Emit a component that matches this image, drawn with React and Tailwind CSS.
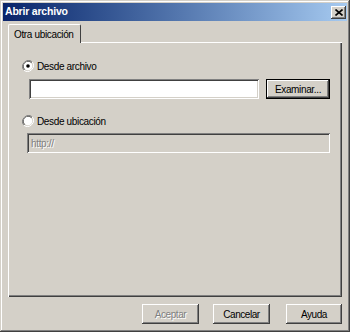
import React from "react";

const raised =
  "shadow-[inset_-1px_-1px_#404040,inset_1px_1px_#ffffff,inset_-2px_-2px_#808080,inset_2px_2px_#d4d0c8]";
const sunken =
  "shadow-[inset_1px_1px_#808080,inset_-1px_-1px_#ffffff,inset_2px_2px_#404040,inset_-2px_-2px_#d4d0c8]";

const Radio = ({ checked }) => (
  <svg width="12" height="12" viewBox="0 0 12 12" className="shrink-0">
    <path d="M10.2 1.8 A6 6 0 0 0 1.8 10.2" fill="none" stroke="#808080" strokeWidth="1" />
    <path d="M9.5 2.5 A5 5 0 0 0 2.5 9.5" fill="none" stroke="#404040" strokeWidth="1" />
    <path d="M1.8 10.2 A6 6 0 0 0 10.2 1.8" fill="none" stroke="#ffffff" strokeWidth="1" />
    <circle cx="6" cy="6" r="4.3" fill="#ffffff" />
    {checked && <circle cx="6" cy="6" r="1.8" fill="#000000" />}
  </svg>
);

const Button = ({ children, disabled, isDefault, className = "" }) => (
  <div
    className={`${className} h-[20px] flex items-center justify-center ${
      isDefault ? "border border-black" : ""
    }`}
  >
    <div className={`w-full h-full flex items-center justify-center ${raised}`}>
      <span
        className={
          disabled
            ? "text-[#808080] [text-shadow:1px_1px_0_#ffffff]"
            : "text-black"
        }
      >
        {children}
      </span>
    </div>
  </div>
);

export default function App() {
  return (
    <div
      className={`w-[350px] h-[332px] bg-[#d4d0c8] p-[3px] flex flex-col text-[10px] tracking-[-0.35px] font-['Liberation_Sans',Arial,sans-serif] shadow-[inset_-1px_-1px_#404040,inset_1px_1px_#d4d0c8,inset_-2px_-2px_#808080,inset_2px_2px_#ffffff]`}
    >
      {/* Title bar */}
      <div className="h-[18px] flex items-center justify-between pl-[2px] pr-[1px] bg-gradient-to-r from-[#0a246a] to-[#a6caf0]">
        <span className="text-white font-bold text-[10.5px] tracking-[-0.2px]">Abrir archivo</span>
        <div className={`w-[15px] h-[13px] bg-[#d4d0c8] flex items-center justify-center ${raised}`}>
          <svg width="8" height="7" viewBox="0 0 8 7">
            <path d="M0.5 0.5 L7.5 6.5 M7.5 0.5 L0.5 6.5" stroke="#000" strokeWidth="1.6" />
          </svg>
        </div>
      </div>

      <div className="flex flex-col px-[5px] pt-[3px]">
        {/* Tab */}
        <div className="relative z-10 -mb-px w-[73px] h-[19px] bg-[#d4d0c8] border-t border-l border-white border-r border-r-[#404040] rounded-tl-[2px] rounded-tr-[2px] flex items-center pl-[5px]">
          <span className="text-black">Otra ubicación</span>
        </div>

        {/* Panel */}
        <div className="h-[255px] bg-[#d4d0c8] shadow-[inset_1px_1px_#ffffff,inset_-1px_-1px_#404040,inset_-2px_-2px_#808080] pl-[14px] pt-[18px] flex flex-col">
          <div className="flex items-center h-[12px] gap-[3px]">
            <Radio checked />
            <span>Desde archivo</span>
          </div>
          <div className="flex ml-[7px] mt-[7px] gap-[7px]">
            <div className={`w-[230px] h-[20px] bg-white ${sunken}`} />
            <Button isDefault className="w-[64px]">Examinar...</Button>
          </div>

          <div className="flex items-center h-[12px] gap-[3px] mt-[16px]">
            <Radio />
            <span>Desde ubicación</span>
          </div>
          <div className={`ml-[5px] mt-[6px] w-[303px] h-[20px] bg-[#d4d0c8] flex items-center pl-[4px] ${sunken}`}>
            <span className="text-[#808080] [text-shadow:1px_1px_0_#ffffff]">http://</span>
          </div>
        </div>

        {/* Buttons */}
        <div className="flex justify-end mt-[7px] tracking-[-0.45px]">
          <Button disabled className="w-[57px]">Aceptar</Button>
          <Button className="w-[57px] ml-[14px]">Cancelar</Button>
          <Button className="w-[56px] ml-[16px]">Ayuda</Button>
        </div>
      </div>
    </div>
  );
}
